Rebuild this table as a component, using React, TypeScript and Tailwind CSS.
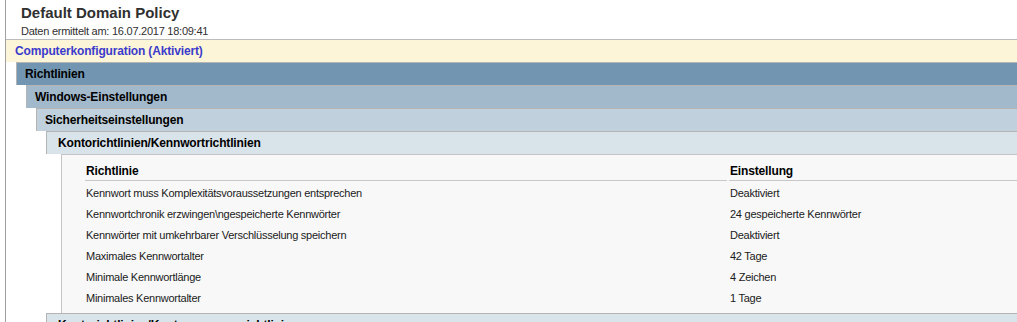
const rows = [
  ["Kennwort muss Komplexitätsvoraussetzungen entsprechen", "Deaktiviert"],
  ["Kennwortchronik erzwingen\\ngespeicherte Kennwörter", "24 gespeicherte Kennwörter"],
  ["Kennwörter mit umkehrbarer Verschlüsselung speichern", "Deaktiviert"],
  ["Maximales Kennwortalter", "42 Tage"],
  ["Minimale Kennwortlänge", "4 Zeichen"],
  ["Minimales Kennwortalter", "1 Tage"],
];

function Bar({ label, className }: { label: string; className: string }) {
  return (
    <div className={`h-[23px] flex items-center border-t border-l border-[#b4b4b4] font-bold text-[12px] tracking-[-0.15px] text-black ${className}`}>
      {label}
    </div>
  );
}

export default function App() {
  return (
    <div className="h-[322px] w-[1017px] overflow-hidden bg-white font-['Liberation_Sans',Arial,sans-serif]">
      <div className="ml-[5px] h-full border-l border-[#a0a0a0]">
        <div className="h-[39px] pl-[15px] pt-[4px]">
          <div className="text-[15px] font-bold leading-[17px] text-[#303030]">Default Domain Policy</div>
          <div className="mt-[4px] text-[11px] tracking-[-0.25px] leading-[13px] text-[#303030]">Daten ermittelt am: 16.07.2017 18:09:41</div>
        </div>

        <div className="h-[23px] flex items-center border-t border-[#bcbcbc] bg-[#fdf5d7] pl-[9px] text-[12px] font-bold tracking-[-0.15px] text-[#3b3bcc]">
          Computerkonfiguration (Aktiviert)
        </div>

        <div className="ml-[10px]">
          <Bar label="Richtlinien" className="bg-[#7296b2] pl-[8px]" />
          <div className="ml-[10px]">
            <Bar label="Windows-Einstellungen" className="bg-[#a2b8cb] pl-[8px]" />
            <div className="ml-[10px]">
              <Bar label="Sicherheitseinstellungen" className="bg-[#c0d1dd] pl-[8px]" />
              <div className="ml-[10px]">
                <Bar label="Kontorichtlinien/Kennwortrichtlinien" className="bg-[#d9e3ea] pl-[11px]" />
                <div className="ml-[15px] border-l border-t border-[#c4c4c4] bg-[#f8f8f8] pl-[23px] pt-[10px] pb-[6px]">
                  <div className="flex text-[12px] font-bold tracking-[-0.15px] text-black">
                    <div className="w-[642px] border-b border-[#c8c8c8] pl-[1px] pb-[2px] leading-[13px]">Richtlinie</div>
                    <div className="ml-[2px] flex-1 border-b border-[#c8c8c8] pl-[1px] pb-[2px] leading-[13px]">Einstellung</div>
                  </div>
                  {rows.map(([name, value]) => (
                    <div key={name} className="flex h-[21px] pt-[6px] text-[11px] leading-[13px] tracking-[-0.25px] text-[#1a1a1a]">
                      <div className="w-[642px] pl-[1px]">{name}</div>
                      <div className="ml-[2px] pl-[1px]">{value}</div>
                    </div>
                  ))}
                </div>
                <Bar label="Kontorichtlinien/Kontosperrungsrichtlinien" className="bg-[#d9e3ea] pl-[11px] items-start pt-[2px]" />
              </div>
            </div>
          </div>
        </div>
      </div>
    </div>
  );
}
